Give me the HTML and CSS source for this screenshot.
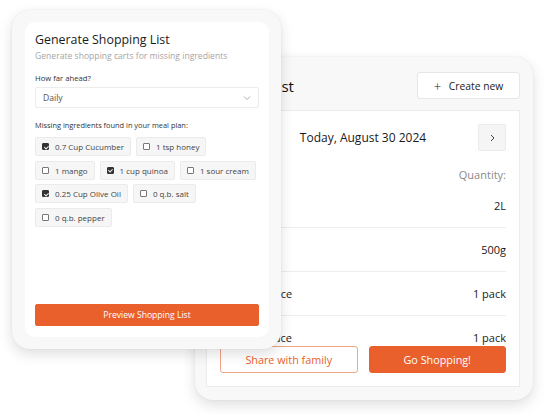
FILE: index.html
```html
<!DOCTYPE html>
<html lang="en">

<head>
    <meta charset="UTF-8">
    <title>Shopping List</title>
    <link rel="stylesheet" href="styles.css">
</head>

<body>
    <div class="canvas">

        <section class="card back">
            <header class="back-head">
                <h2>Shopping List</h2>
                <button class="create"><span class="plus">+</span> Create new</button>
            </header>
            <div class="panel">
                <div class="date-row">
                    <button class="nav">
                        <svg width="10" height="10" viewBox="0 0 10 10"><path d="M6 2 L3 5 L6 8" fill="none" stroke="#444" stroke-width="1"/></svg>
                    </button>
                    <p class="date">Today, August 30 2024</p>
                    <button class="nav">
                        <svg width="10" height="10" viewBox="0 0 10 10"><path d="M4 2 L7 5 L4 8" fill="none" stroke="#444" stroke-width="1"/></svg>
                    </button>
                </div>
                <div class="list">
                    <p class="qty-head">Quantity:</p>
                    <div class="row"><span>Milk</span><span>2L</span></div>
                    <div class="row"><span>Rice</span><span>500g</span></div>
                    <div class="row"><span>Teriyaki sauce</span><span>1 pack</span></div>
                    <div class="row"><span>Tomato sauce</span><span>1 pack</span></div>
                </div>
                <div class="actions">
                    <button class="share">Share with family</button>
                    <button class="go">Go Shopping!</button>
                </div>
            </div>
        </section>

        <section class="card front">
            <div class="sheet">
                <h1>Generate Shopping List</h1>
                <p class="sub">Generate shopping carts for missing ingredients</p>
                <p class="label ahead">How far ahead?</p>
                <div class="select">
                    <span>Daily</span>
                    <svg width="8" height="6" viewBox="0 0 8 6"><path d="M1 1.5 L4 4.5 L7 1.5" fill="none" stroke="#999" stroke-width="0.8"/></svg>
                </div>
                <p class="label missing">Missing ingredients found in your meal plan:</p>
                <div class="chips">
                    <label class="chip"><span class="box on"></span>0.7 Cup Cucumber</label>
                    <label class="chip"><span class="box"></span>1 tsp honey</label>
                    <label class="chip"><span class="box"></span>1 mango</label>
                    <label class="chip"><span class="box on"></span>1 cup quinoa</label>
                    <label class="chip"><span class="box"></span>1 sour cream</label>
                    <label class="chip"><span class="box on"></span>0.25 Cup Olive Oil</label>
                    <label class="chip"><span class="box"></span>0 q.b. salt</label>
                    <label class="chip"><span class="box"></span>0 q.b. pepper</label>
                </div>
                <button class="preview">Preview Shopping List</button>
            </div>
        </section>

    </div>
</body>

</html>
```

FILE: styles.css
```css
* {
    margin: 0;
    box-sizing: border-box;
}

body {
    margin: 0;
    background: #fff;
    font-family: "Open Sans", sans-serif;
    color: #222;
}

button {
    font-family: inherit;
    cursor: pointer;
}

.canvas {
    position: relative;
    width: 545px;
    height: 414px;
    overflow: hidden;
}

/* both windows */
.card {
    position: absolute;
    background: #f8f8f8;
    border-radius: 18px;
    box-shadow: 0 5px 14px rgba(0, 0, 0, 0.13), 0 0 2px rgba(0, 0, 0, 0.08);
}

/* ---------- back window ---------- */
.back {
    left: 195px;
    top: 57px;
    width: 338px;
    height: 343px;
    padding: 15px 13px 13px 11px;
    display: flex;
    flex-direction: column;
    gap: 11px;
}

.back-head {
    height: 27px;
    display: flex;
    align-items: center;
    justify-content: space-between;
}

.back-head h2 {
    font-size: 15px;
    font-weight: 500;
    margin-left: -6px;
    color: #111;
}

.create {
    width: 103px;
    height: 27px;
    background: #fff;
    border: 1px solid #e6e6e6;
    border-radius: 3px;
    font-size: 10.3px;
    color: #222;
}

.plus {
    font-size: 13px;
    font-weight: 300;
    margin-right: 5px;
    vertical-align: -1px;
}

.panel {
    flex: 1;
    min-height: 0;
    background: #fff;
    border: 1px solid #ececec;
    padding: 13px;
    display: flex;
    flex-direction: column;
}

.date-row {
    height: 27px;
    display: flex;
    align-items: center;
    justify-content: space-between;
}

.date {
    font-size: 12px;
    color: #1a1a1a;
}

.nav {
    width: 28px;
    height: 27px;
    background: #f5f5f5;
    border: 1px solid #ebebeb;
    border-radius: 2px;
    display: flex;
    align-items: center;
    justify-content: center;
    padding: 0;
}

.list {
    flex: 1;
    min-height: 0;
    overflow: hidden;
}

.qty-head {
    margin-top: 14px;
    line-height: 19px;
    text-align: right;
    font-size: 11px;
    color: #8a8a8a;
}

.row {
    height: 44px;
    display: flex;
    align-items: center;
    justify-content: space-between;
    border-bottom: 1px solid #eeeeee;
    font-size: 11px;
    color: #1a1a1a;
}

.actions {
    display: grid;
    grid-template-columns: 1fr 1fr;
    gap: 11px;
}

.actions button {
    height: 27px;
    border-radius: 3px;
    font-size: 10.8px;
}

.share {
    background: #fff;
    border: 1px solid #f0a584;
    color: #e9602c;
}

.go {
    background: #e9602c;
    border: 1px solid #e9602c;
    color: #fff;
}

/* ---------- front window ---------- */
.front {
    left: 12px;
    top: 10px;
    width: 269px;
    height: 339px;
    padding: 12px 12px 12px 13px;
    z-index: 2;
}

.sheet {
    height: 100%;
    background: #fff;
    border-radius: 10px;
    padding: 9px 10px 11px 10px;
    display: flex;
    flex-direction: column;
}

.sheet h1 {
    font-size: 12.4px;
    line-height: 18px;
    font-weight: 500;
    color: #1a1a1a;
}

.sub {
    margin-top: 1px;
    font-size: 8.6px;
    line-height: 12px;
    color: #a5a5a5;
}

.label {
    line-height: 10px;
    color: #333;
}

.ahead {
    margin-top: 11px;
    font-size: 7.7px;
}

.select {
    margin-top: 4px;
    height: 21px;
    border: 1px solid #ececec;
    border-radius: 2px;
    padding: 0 7px;
    display: flex;
    align-items: center;
    justify-content: space-between;
    font-size: 8.6px;
    color: #555;
}

.missing {
    margin-top: 12px;
    font-size: 7.4px;
}

.chips {
    margin-top: 7px;
    display: flex;
    flex-wrap: wrap;
    gap: 4.5px 5px;
}

.chip {
    height: 19px;
    display: flex;
    align-items: center;
    gap: 6px;
    padding: 0 6px;
    background: #f6f6f6;
    border: 1px solid #ebebeb;
    border-radius: 2px;
    font-size: 8px;
    color: #444;
}

.box {
    position: relative;
    width: 7px;
    height: 7px;
    border: 0.8px solid #777;
    background: #fff;
    border-radius: 1px;
}

.box.on {
    background: #333;
    border-color: #333;
}

.box.on::after {
    content: "";
    position: absolute;
    left: 1.6px;
    top: 0.6px;
    width: 1.6px;
    height: 3px;
    border: solid #fff;
    border-width: 0 0.6px 0.6px 0;
    transform: rotate(45deg);
}

.preview {
    margin-top: auto;
    height: 22px;
    background: #e9602c;
    border: 1px solid #e9602c;
    border-radius: 2px;
    color: #fff;
    font-size: 8.6px;
}
```
